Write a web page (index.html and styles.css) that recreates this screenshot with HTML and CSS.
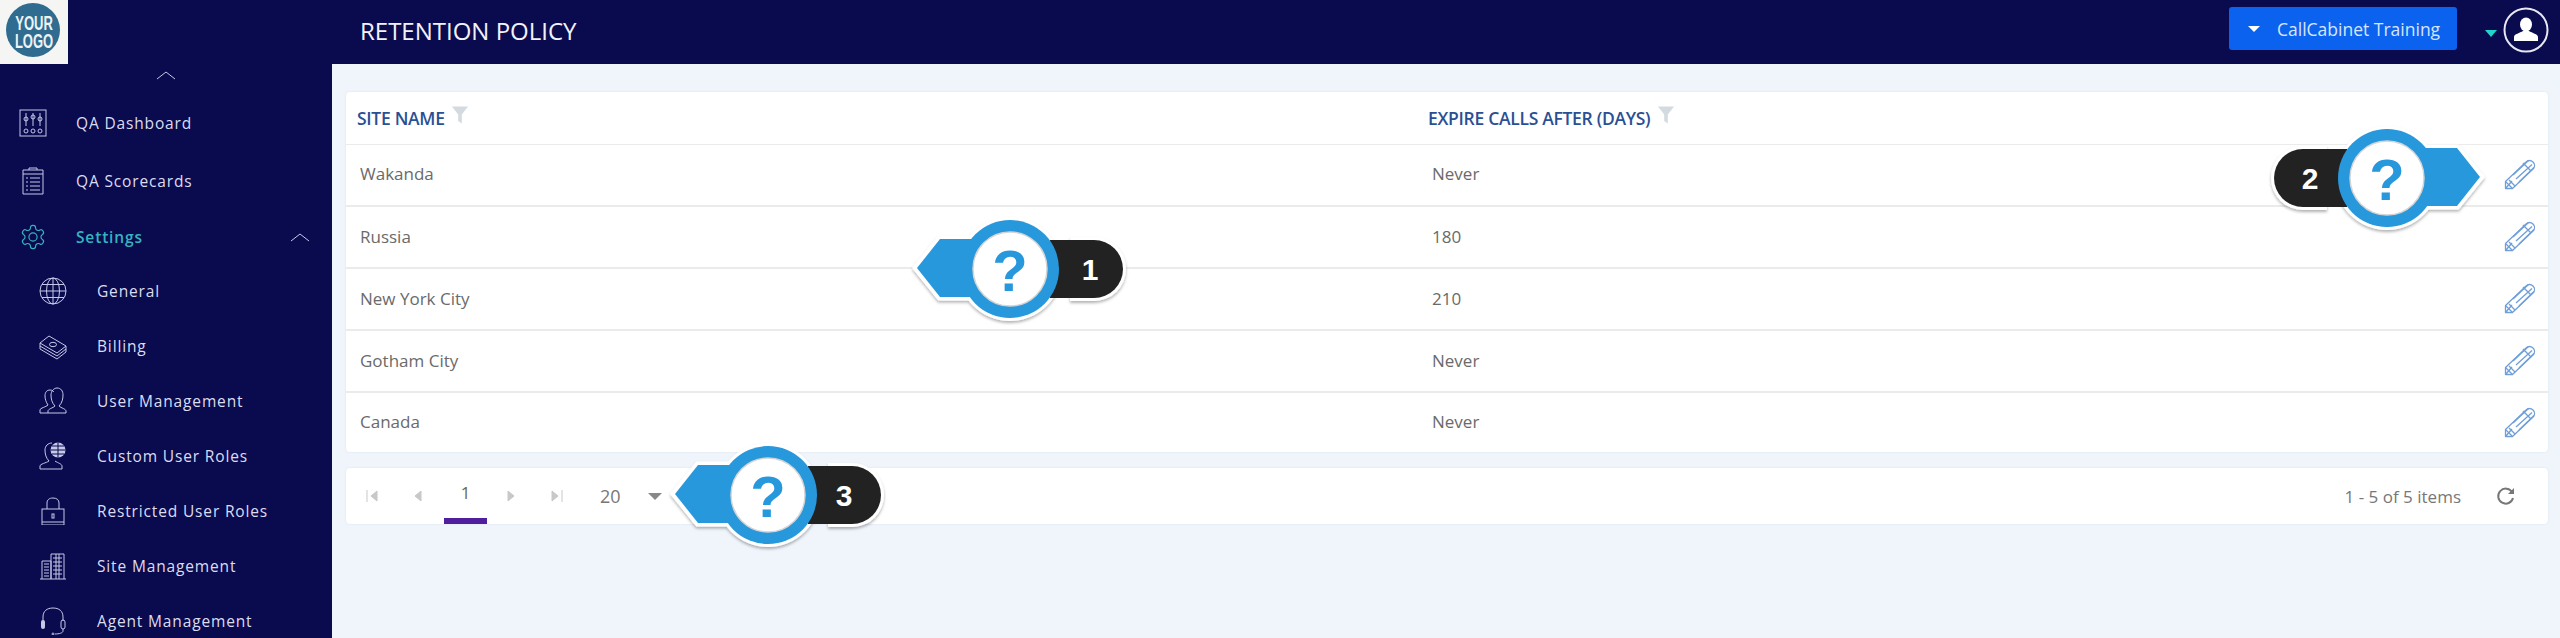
FILE: index.html
```html
<!DOCTYPE html>
<html lang="en">

<head>
  <meta charset="UTF-8">
  <title>Retention Policy</title>
  <link rel="stylesheet" href="styles.css">
</head>

<body>
  <svg class="defs" aria-hidden="true">
    <defs>
      <filter id="soft" x="-10%" y="-10%" width="120%" height="130%">
        <feDropShadow dx="0" dy="2" stdDeviation="1.5" flood-color="#000" flood-opacity="0.3"/>
      </filter>
      <g id="bubble">
        <g filter="url(#soft)">
          <path d="M60 -32H84A32 32 0 0 1 84 32H60Z" fill="#fff"/>
          <path d="M-96 -1L-71 -32H-30V30H-71Z" fill="#fff" stroke="#fff" stroke-width="3" stroke-linejoin="round"/>
          <circle r="52" fill="#fff"/>
        </g>
        <path d="M40 -29H84A29 29 0 0 1 84 29H40Z" fill="#222"/>
        <path d="M-93 -1L-70 -30H-30V28H-70Z" fill="#2898dc"/>
        <circle r="49" fill="#2898dc"/>
        <circle r="37" fill="#fff" stroke="#d4d4d4" stroke-width="1.5"/>
      </g>
      <g id="pencil" fill="none" stroke="#6f9fd8" stroke-width="1.3" stroke-linejoin="round">
        <path d="M8 22L1.5 29.5L1.5 22.5L22 3C24 1 27 1 29 3C31 5 31 8 29 10L8.5 29.5H1.5"/>
        <path d="M1.5 22.5L8.5 29.5M5 21L11 27M9 16L24.5 1.5M12 20L28 5.5M15 23L30 8.5M19 4L27 12"/>
      </g>
    </defs>
  </svg>

  <header class="topbar">
    <div class="logo">
      <svg width="68" height="64" viewBox="0 0 68 64">
        <circle cx="33" cy="30" r="27" fill="#2f6c90"/>
        <text transform="translate(34 30) scale(1 1.6)" class="logo-text"><tspan x="0" y="0">YOUR</tspan><tspan x="0" y="11.25">LOGO</tspan></text>
      </svg>
    </div>
    <h1 class="page-title">RETENTION POLICY</h1>
    <button class="site-btn"><span class="caret caret-white"></span>CallCabinet Training</button>
    <span class="caret caret-teal"></span>
    <svg class="avatar" width="46" height="46" viewBox="0 0 46 46">
      <circle cx="23" cy="23" r="21.5" fill="none" stroke="#e8e8f2" stroke-width="2"/>
      <ellipse cx="23" cy="17.5" rx="6" ry="7" fill="#fff"/>
      <path d="M11 34V30C11 27 17 26 20 24H26C29 26 35 27 35 30V34Z" fill="#fff"/>
    </svg>
  </header>

  <div class="layout">
    <nav class="sidebar">
      <div class="nav-up">
        <svg width="20" height="10" viewBox="0 0 20 10"><path d="M1 9L10 2L19 9" class="ln"/></svg>
      </div>

      <a class="nav-item top first" href="#">
        <svg class="ico" viewBox="0 0 28 28">
          <rect x="1" y="1" width="26" height="26" class="ln"/>
          <path d="M7 4V17M14 4V17M21 4V17" class="ln"/>
          <circle cx="7" cy="10" r="2" class="ln"/><circle cx="14" cy="8" r="2" class="ln"/><circle cx="21" cy="10" r="2" class="ln"/>
          <circle cx="7" cy="22" r="2" class="ln"/><circle cx="14" cy="22" r="2" class="ln"/><circle cx="21" cy="22" r="2" class="ln"/>
        </svg>
        QA Dashboard
      </a>
      <a class="nav-item top" href="#">
        <svg class="ico" viewBox="0 0 28 28">
          <path d="M4 3H24V27H4Z M4 7H24 M10 3V1H18V3" class="ln"/>
          <path d="M11 11H21M11 15H21M11 19H21M11 23H21M7 11H9M7 15H9M7 19H9M7 23H9" class="ln"/>
        </svg>
        QA Scorecards
      </a>
      <a class="nav-item top active" href="#">
        <svg class="ico" viewBox="0 0 24 24">
          <path d="M12.22 2h-.44a2 2 0 0 0-2 2v.18a2 2 0 0 1-1 1.73l-.43.25a2 2 0 0 1-2 0l-.15-.08a2 2 0 0 0-2.73.73l-.22.38a2 2 0 0 0 .73 2.73l.15.1a2 2 0 0 1 1 1.72v.51a2 2 0 0 1-1 1.74l-.15.09a2 2 0 0 0-.73 2.73l.22.38a2 2 0 0 0 2.73.73l.15-.08a2 2 0 0 1 2 0l.43.25a2 2 0 0 1 1 1.73V20a2 2 0 0 0 2 2h.44a2 2 0 0 0 2-2v-.18a2 2 0 0 1 1-1.73l.43-.25a2 2 0 0 1 2 0l.15.08a2 2 0 0 0 2.73-.73l.22-.39a2 2 0 0 0-.73-2.73l-.15-.08a2 2 0 0 1-1-1.74v-.5a2 2 0 0 1 1-1.74l.15-.09a2 2 0 0 0 .73-2.73l-.22-.38a2 2 0 0 0-2.73-.73l-.15.08a2 2 0 0 1-2 0l-.43-.25a2 2 0 0 1-1-1.73V4a2 2 0 0 0-2-2z" class="ln"/>
          <circle cx="12" cy="12" r="3.5" class="ln"/>
        </svg>
        Settings
        <svg class="nav-chevron" width="20" height="10" viewBox="0 0 20 10"><path d="M1 9L10 2L19 9" class="ln"/></svg>
      </a>

      <a class="nav-item sub" href="#">
        <svg class="ico" viewBox="0 0 28 28">
          <circle cx="14" cy="14" r="13" class="ln"/>
          <ellipse cx="14" cy="14" rx="6.5" ry="13" class="ln"/>
          <path d="M14 1V27M1 14H27M3 7.5H25M3 20.5H25" class="ln"/>
        </svg>
        General
      </a>
      <a class="nav-item sub" href="#">
        <svg class="ico" viewBox="0 0 28 28">
          <path d="M1 11L10 4L27 14L18 21Z" class="ln"/>
          <path d="M1 11V14L18 24L27 17V14M1 14V17L18 27L27 20V17" class="ln"/>
          <ellipse cx="14" cy="12.5" rx="3.5" ry="2.2" class="ln"/>
        </svg>
        Billing
      </a>
      <a class="nav-item sub" href="#">
        <svg class="ico" viewBox="0 0 28 28">
          <path d="M1 26V23C1 21 7 20 9 18C7 15 6 12 6 9C6 5 8 3 11 3C13 3 14 4 15 5" class="ln"/>
          <path d="M9 26V24C9 22 14 21 16 19C13 16 12 12 12 8C12 4 15 1 18 1C22 1 24 4 24 8C24 12 23 16 20 19C22 21 27 22 27 24V26H1" class="ln"/>
        </svg>
        User Management
      </a>
      <a class="nav-item sub" href="#">
        <svg class="ico" viewBox="0 0 28 28">
          <path d="M1 27V24C1 22 7 21 10 19C7 16 6 12 6 8C6 4 9 1 13 1" class="ln"/>
          <path d="M1 27H23V24C23 22 19 21 16 19" class="ln"/>
          <circle cx="19" cy="8" r="7.5" fill="#c5c8e8"/>
          <path d="M11.5 8H26.5M19 .5V15.5M13 4H25M13 12H25" stroke="#0a0a4e" stroke-width="1" fill="none"/>
        </svg>
        Custom User Roles
      </a>
      <a class="nav-item sub" href="#">
        <svg class="ico" viewBox="0 0 28 28">
          <rect x="3" y="12" width="22" height="16" class="ln"/>
          <path d="M8 12V6C8 3 10 1 14 1C18 1 20 3 20 6V12M3 25H25" class="ln"/>
          <rect x="13" y="17" width="2" height="4" class="ln"/>
        </svg>
        Restricted User Roles
      </a>
      <a class="nav-item sub" href="#">
        <svg class="ico" viewBox="0 0 28 28">
          <path d="M1 27H27M3 27V9H12V27M12 27V2H25V27" class="ln"/>
          <path d="M5 12H10M5 15H10M5 18H10M5 21H10M5 24H10M14 6H23M14 10H23M14 14H23M14 18H23M14 22H23M17 2V27M20 2V27" class="ln"/>
        </svg>
        Site Management
      </a>
      <a class="nav-item sub" href="#">
        <svg class="ico" viewBox="0 0 28 28">
          <path d="M4 14V10C4 4 8 1 14 1C20 1 24 4 24 10V14" class="ln"/>
          <rect x="2" y="13" width="4" height="9" rx="2" fill="#c5c8e8"/>
          <rect x="22" y="13" width="4" height="9" rx="2" class="ln"/>
          <path d="M24 22V24C24 26 20 27 16 27" class="ln"/>
          <circle cx="14" cy="27" r="1" class="ln"/>
        </svg>
        Agent Management
      </a>
    </nav>

    <main class="content">
      <section class="card grid-card">
        <table class="grid">
          <thead>
            <tr>
              <th class="col-site">SITE NAME <svg class="filter" width="18" height="19" viewBox="0 0 20 20"><path d="M1 0H19L12 9V19L8 16V9Z"/></svg></th>
              <th class="col-expire">EXPIRE CALLS AFTER (DAYS) <svg class="filter" width="18" height="19" viewBox="0 0 20 20"><path d="M1 0H19L12 9V19L8 16V9Z"/></svg></th>
              <th class="col-edit"></th>
            </tr>
          </thead>
          <tbody>
            <tr><td>Wakanda</td><td>Never</td><td class="col-edit"><svg class="pencil"><use href="#pencil"/></svg></td></tr>
            <tr><td>Russia</td><td>180</td><td class="col-edit"><svg class="pencil"><use href="#pencil"/></svg></td></tr>
            <tr><td>New York City</td><td>210</td><td class="col-edit"><svg class="pencil"><use href="#pencil"/></svg></td></tr>
            <tr><td>Gotham City</td><td>Never</td><td class="col-edit"><svg class="pencil"><use href="#pencil"/></svg></td></tr>
            <tr><td>Canada</td><td>Never</td><td class="col-edit"><svg class="pencil"><use href="#pencil"/></svg></td></tr>
          </tbody>
        </table>
      </section>

      <section class="card pager">
        <svg class="pg-ico" viewBox="0 0 12 14"><path d="M1 1V13M11 2V12L5 7Z"/></svg>
        <svg class="pg-ico prev" viewBox="0 0 12 14"><path d="M9 2V12L3 7Z"/></svg>
        <span class="pg-current">1</span>
        <svg class="pg-ico" viewBox="0 0 12 14"><path d="M3 2V12L9 7Z"/></svg>
        <svg class="pg-ico" viewBox="0 0 12 14"><path d="M11 1V13M1 2V12L7 7Z"/></svg>
        <span class="pg-size">20</span>
        <span class="caret caret-grey"></span>
        <span class="pg-info">1 - 5 of 5 items</span>
        <svg class="pg-refresh" width="20" height="20" viewBox="0 0 20 20">
          <path d="M16 6A7.5 7.5 0 1 0 17 12" fill="none" stroke="#777" stroke-width="2"/>
          <path d="M18 2V8H12Z" fill="#777"/>
        </svg>
      </section>
    </main>
  </div>

  <!-- help bubbles over the page -->
  <svg class="callout c1" viewBox="-130 -65 260 130">
    <use href="#bubble"/>
    <text y="22" class="q">?</text>
    <text x="80" y="11" class="num">1</text>
  </svg>
  <svg class="callout c2" viewBox="-130 -65 260 130">
    <use href="#bubble" transform="scale(-1 1)"/>
    <text y="22" class="q">?</text>
    <text x="-77" y="11" class="num">2</text>
  </svg>
  <svg class="callout c3" viewBox="-130 -65 260 130">
    <use href="#bubble"/>
    <text y="22" class="q">?</text>
    <text x="76" y="11" class="num">3</text>
  </svg>
</body>

</html>
```

FILE: styles.css
```css
:root {
  --navy: #0a0a4e;
  --page-bg: #f0f5fc;
  --nav-text: #dcdcf0;
  --nav-line: #c5c8e8;
  --teal: #35b4c0;
  --line: #ebebeb;
  --cell-text: #6a6a6a;
}

* {
  box-sizing: border-box;
}

html, body {
  height: 638px;
  overflow: hidden;
}

body {
  margin: 0;
  position: relative;
  font-family: "Open Sans", Arial, sans-serif;
  background: var(--page-bg);
}

.defs {
  display: block;
  width: 0;
  height: 0;
}

/* top bar */
.topbar {
  height: 64px;
  background: var(--navy);
  display: flex;
  align-items: center;
  padding-right: 11px;
}

.logo {
  width: 68px;
  height: 64px;
  background: #f5f5f3;
}

.logo svg {
  display: block;
}

.logo-text {
  font-family: "Liberation Sans", Arial, sans-serif;
  font-weight: bold;
  font-size: 13px;
  fill: #eef3f6;
  text-anchor: middle;
}

.page-title {
  margin: -4px 0 0 292px;
  font-size: 24px;
  font-weight: 400;
  color: #f2f2f8;
  flex: 1;
}

.site-btn {
  width: 228px;
  height: 43px;
  margin-top: -7px;
  padding: 0 0 0 19px;
  background: #0b62ee;
  border: none;
  border-radius: 3px;
  display: flex;
  align-items: center;
  gap: 17px;
  font-family: inherit;
  font-size: 17.5px;
  color: #d6e6ff;
}

.caret {
  display: inline-block;
  width: 0;
  height: 0;
  border-left: 6px solid transparent;
  border-right: 6px solid transparent;
}

.caret-white {
  border-top: 6px solid #fff;
}

.caret-teal {
  margin: 2px 0 0 28px;
  border-top: 7px solid #1fd6c8;
}

.caret-grey {
  margin-left: 27px;
  border-left-width: 7px;
  border-right-width: 7px;
  border-top: 7px solid #888;
}

.avatar {
  margin-left: 6px;
  margin-top: -4px;
}

/* sidebar */
.layout {
  display: flex;
  height: 574px;
}

.sidebar {
  width: 332px;
  flex: none;
  background: var(--navy);
  overflow: hidden;
}

.nav-up {
  height: 29px;
  padding: 6px 0 0 156px;
}

.nav-up svg {
  display: block;
}

.ln {
  fill: none;
  stroke: var(--nav-line);
  stroke-width: 1;
}

.nav-item {
  display: flex;
  align-items: center;
  color: var(--nav-text);
  text-decoration: none;
  font-size: 15.5px;
  letter-spacing: 0.85px;
}

.nav-item .ico {
  width: 28px;
  height: 28px;
  flex: none;
}

.top {
  height: 58px;
  padding-left: 19px;
  gap: 29px;
}

.first {
  height: 59px;
}

.sub {
  height: 55px;
  padding-left: 39px;
  gap: 30px;
}

.active {
  height: 53px;
  color: var(--teal);
  font-weight: 600;
}

.active .ln {
  stroke: var(--teal);
}

.nav-chevron {
  margin-left: auto;
  margin-right: 22px;
}

.nav-chevron .ln {
  stroke: var(--nav-line);
}

/* content */
.content {
  flex: 1;
  padding: 28px 12px 0 14px;
}

.card {
  background: #fff;
  border-radius: 4px;
  box-shadow: 0 0 2px rgba(60, 80, 120, 0.12);
}

.grid {
  width: 100%;
  border-collapse: collapse;
  table-layout: fixed;
}

.grid th {
  height: 52px;
  text-align: left;
  font-size: 17.5px;
  font-weight: 600;
  color: #2b4f93;
  letter-spacing: -0.3px;
  border-bottom: 1px solid var(--line);
}

.col-site {
  width: 1072px;
  padding-left: 11px;
}

.col-expire {
  padding-left: 10px;
}

.col-edit {
  width: 120px;
}

.filter {
  fill: #d3dbe0;
  vertical-align: 0;
  margin-left: 2px;
}

.grid td {
  height: 62px;
  padding: 0 0 2px 14px;
  font-size: 17px;
  color: var(--cell-text);
  border-bottom: 2px solid var(--line);
}

.grid tr:last-child td {
  height: 60px;
  border-bottom: none;
}

.grid td.col-edit {
  padding: 0 12px 0 0;
  text-align: right;
}

.pencil {
  width: 32px;
  height: 32px;
  vertical-align: middle;
}

.pager {
  height: 56px;
  margin-top: 16px;
  padding: 0 32px 0 20px;
  display: flex;
  align-items: center;
}

.pg-ico {
  width: 12px;
  height: 14px;
  margin-right: 34px;
  fill: #c8c8c8;
  stroke: #c8c8c8;
  stroke-width: 1;
}

.prev {
  margin-right: 20px;
}

.pg-current {
  width: 43px;
  margin-right: 18px;
  height: 56px;
  line-height: 50px;
  text-align: center;
  font-size: 17px;
  color: #6a6a4a;
  border-bottom: 6px solid #4f1f9e;
}

.pg-size {
  margin-left: 3px;
  font-size: 18px;
  color: #777;
}

.pg-info {
  margin-left: auto;
  font-size: 17px;
  color: #777;
}

.pg-refresh {
  margin-left: 35px;
}

/* help bubbles */
.callout {
  position: absolute;
  width: 260px;
  height: 130px;
}

.c1 {
  left: 880px;
  top: 204px;
}

.c2 {
  left: 2257px;
  top: 113px;
}

.c3 {
  left: 638px;
  top: 430px;
}

.q {
  font-family: "Liberation Sans", Arial, sans-serif;
  font-weight: bold;
  font-size: 58px;
  fill: #2898dc;
  text-anchor: middle;
}

.num {
  font-family: "Liberation Sans", Arial, sans-serif;
  font-weight: bold;
  font-size: 30px;
  fill: #fff;
  text-anchor: middle;
}
```
